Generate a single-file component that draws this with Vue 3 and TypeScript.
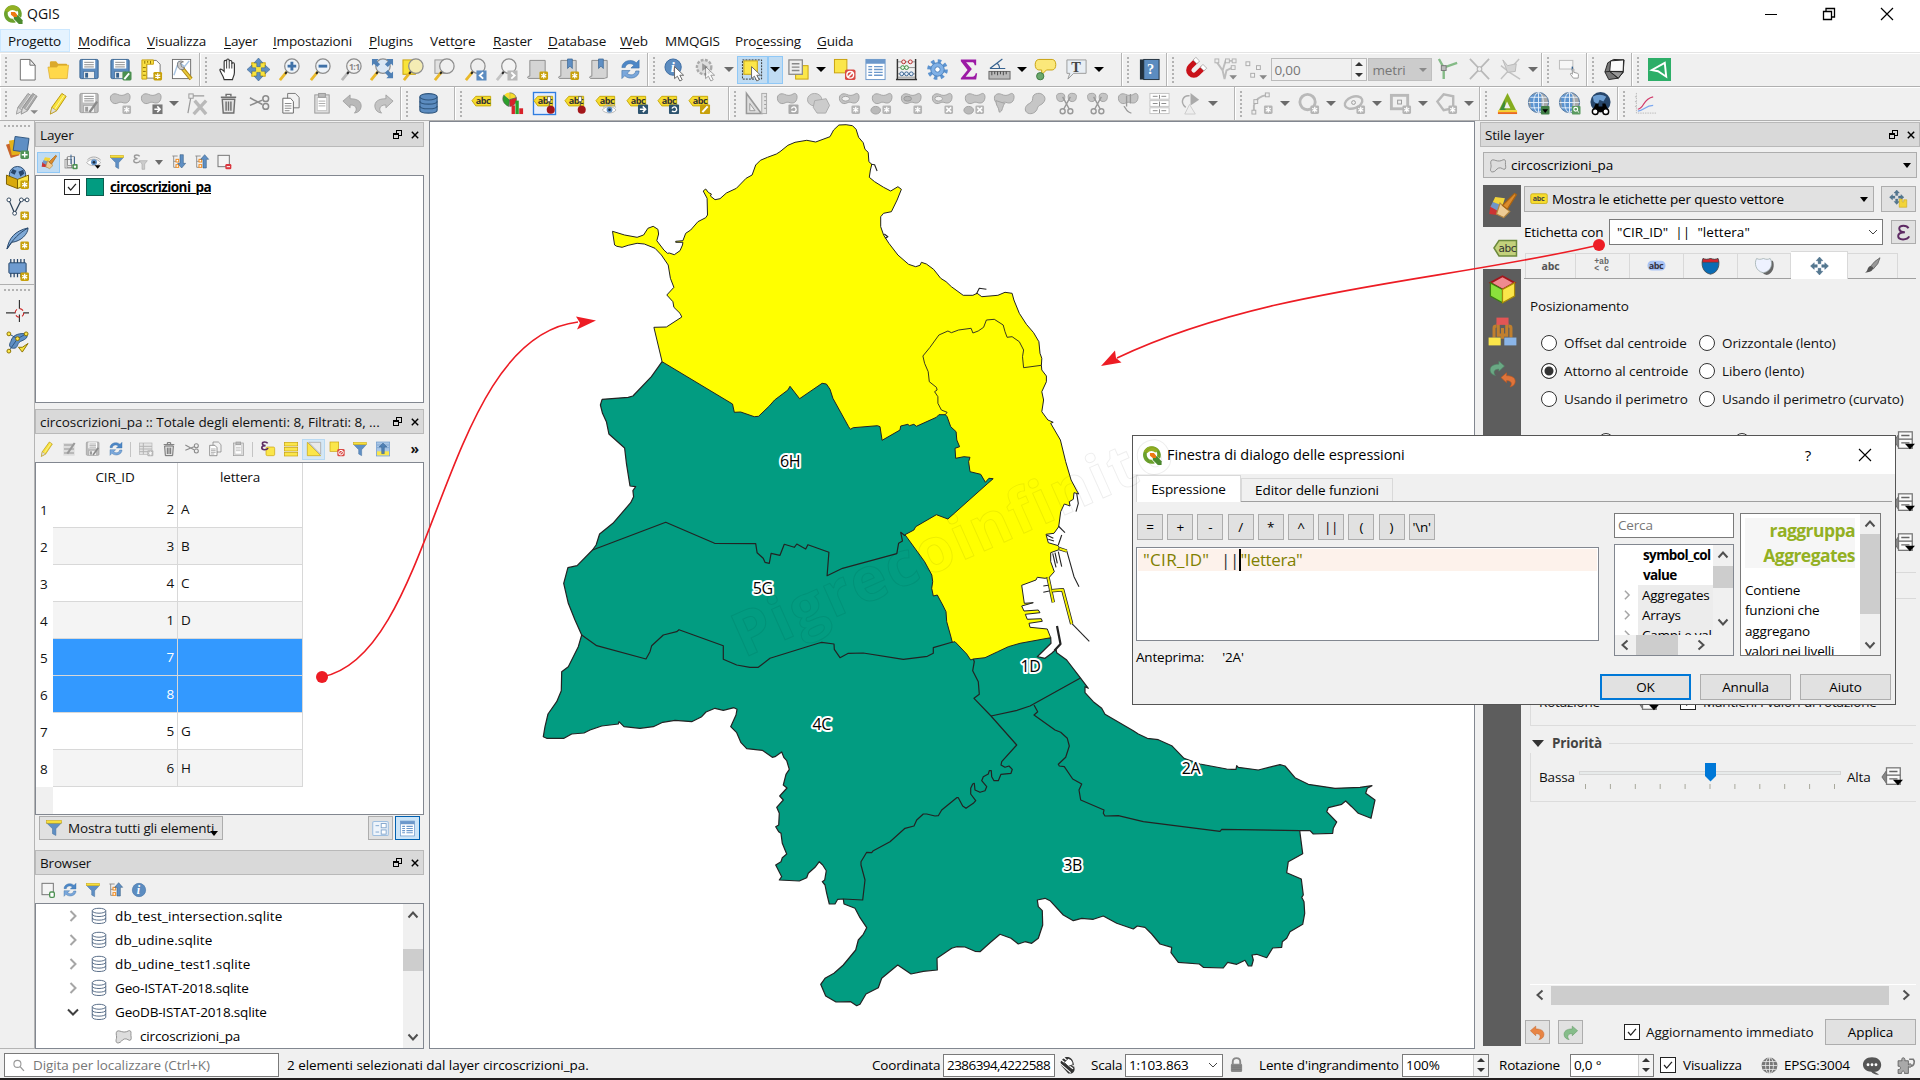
<script setup lang="ts">
interface Group { w: number; items: string[] }

const star = (x: number, y: number, c: string) =>
  `<rect x="${x}" y="${y}" width="9" height="9" rx="1.5" fill="${c}"/><path d="M${x + 4.5} ${y + 1.5}v6M${x + 1.9} ${y + 3}l5.2 3M${x + 7.1} ${y + 3}l-5.2 3" stroke="#fff" stroke-width="1.3"/>`
const gold = '#c8a10c'
const grey = '#b5b5b5'
const mag = (glass: string, handle: string, inner = '') =>
  `<path d="M9 14.5L2 23" stroke="${handle}" stroke-width="3"/><path d="M10.5 12.5L7.5 16.5" stroke="#222" stroke-width="2"/><circle cx="14.5" cy="8.5" r="7.5" fill="${glass}" stroke="#8d8d8d" stroke-width="1.3"/>${inner}`
const tag = (extra = '') =>
  `<path d="M1 9L5 4.5H20.5V14.5H5Z" fill="#f6dc2c" stroke="#c6a70c"/><text x="5" y="12.6" font-size="9.5" font-weight="700" fill="#333" font-family="Open Sans" letter-spacing="-.6">abc</text>${extra}`
const pin = '<path d="M17 6v10" stroke="#555"/><rect x="15" y="5" width="3.5" height="5" fill="#fff" stroke="#555" stroke-width=".7"/><circle cx="18.5" cy="18.5" r="4.2" fill="#a3161a"/>'
const floppy = (c: string, d: string) =>
  `<rect x="2" y="1.5" width="19" height="20" rx="1.5" fill="${c}" stroke="${d}"/><rect x="5" y="2" width="13" height="9" fill="#fff"/><path d="M6.5 4.5h10M6.5 7h10M6.5 9.3h10" stroke="#888"/><rect x="6" y="14" width="11" height="7.5" fill="#eee" stroke="${d}" stroke-width=".6"/><rect x="7.5" y="15.5" width="3" height="5" fill="${d}"/>`
const blob = '<path d="M1.5 7C1 2 6 1 9 2.5S15 4 18 2s5 2 3.5 6-5 4-8 2.8-5 2.2-8 1.2S1.8 9.500 1.5 7Z" fill="#c4c4c4" stroke="#a2a2a2"/>'
const xbadge = '<rect x="14" y="14" width="9" height="9" rx="1.5" fill="#b5b5b5"/><path d="M16 16l5 5m0-5l-5 5" stroke="#fff" stroke-width="1.6"/>'
const sheet = '<path d="M4 2.500h16v18c-2 0-2 .8-3 .8H3c-1.500 0-2-2 0-2.300h1Z" fill="#d4d4d4" stroke="#8c8c8c"/>'
const globe = (c: string, s: string) =>
  `<circle cx="12" cy="11" r="10.500" fill="#a9a9a9" stroke="${s}"/><path d="M3 5c5-4 10-4 12-3v17c-4 3-8 2-11-2Z" fill="${c}"/><path d="M1.500 11h21M12 .5v21M3.500 5.500h17M3.500 16.500h17" stroke="#e4eefa"/><ellipse cx="12" cy="11" rx="5" ry="10.500" fill="none" stroke="#e4eefa"/>`
const refresh = '<path d="M3 10C3 3 13 0 18 5l3-3v8.500h-8.500l3-3C12 4.500 7 6 6.500 10Z" fill="#4d87c7" stroke="#3a6ea5" stroke-width=".6"/><path d="M21 13.500c0 7-10 10-15 5l-3 3V13h8.500l-3 3c3.500 3 8.500 1.500 9-2.500Z" fill="#7aa7db" stroke="#3a6ea5" stroke-width=".6"/>'
const funnel = '<path d="M2 5h20l-7.500 8v9l-4.500-2.500V13Z" fill="#5f8fc4" stroke="#44709f" stroke-width=".7"/><rect x="2" y="2" width="20" height="3.600" fill="#f6e03c" stroke="#c8a10c" stroke-width=".7"/>'
const pencil = (c: string, s: string) =>
  `<path d="M5 16L15.500 1.500l4.500 3L10 19.500l-6.500 3.500Z" fill="${c}" stroke="${s}"/><path d="M8 18L18 3.200" stroke="#fff" stroke-opacity=".6"/><path d="M5 16l5 3.500-6.500 3.500Z" fill="#ddd" stroke="${s}" stroke-width=".6"/>`
const trash = '<path d="M5.500 7.500h13L17.500 22h-11Z" fill="#e4e4e4" stroke="#6f6f6f" stroke-width="1.500"/><path d="M4 5.500h16M9.500 4.500V2.500h5v2M9.500 10v9.500M12 10v9.500M14.500 10v9.500" fill="none" stroke="#6f6f6f" stroke-width="1.500"/>'
const cut = '<path d="M2 6l13 7M2 14l13-5.500" stroke="#8b8b8b" stroke-width="1.600"/><circle cx="18.500" cy="7" r="3" fill="none" stroke="#8b8b8b" stroke-width="1.600"/><circle cx="18.500" cy="15" r="3" fill="none" stroke="#8b8b8b" stroke-width="1.600"/>'
const copy = '<path d="M9 1.500h8l4 4v11H9Z" fill="#f2f2f2" stroke="#777"/><path d="M4 6.500h8l3 3.500v12H4Z" fill="#fff" stroke="#666"/><path d="M6 12h7M6 14.500h7M6 17h7M6 19.500h5" stroke="#888"/>'
const paste = '<rect x="5" y="3" width="15" height="19" fill="#ddd" stroke="#999"/><rect x="7.500" y="6" width="10" height="13.500" fill="#fff" stroke="#aaa" stroke-width=".6"/><rect x="9" y="1.500" width="7" height="4" fill="#bbb" stroke="#999"/><path d="M9 9.500h7M9 12h7M9 14.500h7" stroke="#aaa"/>'
const undo = (c: string, s: string) => `<path d="M2 9.500L9.500 3v4c8 0 12 3 11.500 8.500C20.500 19 18 21.500 14 22c3-3 3-8.500-4.500-8.500V16.500Z" fill="${c}" stroke="${s}" stroke-width=".8"/>`
const redo = (c: string, s: string) => `<g transform="matrix(-1 0 0 1 24 0)">${undo(c, s)}</g>`
const db = (c: string, s: string) =>
  `<path d="M3 5v14c0 4 18 4 18 0V5" fill="${c}" stroke="${s}" stroke-width="1.200"/><ellipse cx="12" cy="5" rx="9" ry="3.300" fill="${c}" stroke="${s}" stroke-width="1.200"/><path d="M3 9.700c0 4 18 4 18 0M3 14.500c0 4 18 4 18 0" fill="none" stroke="${s}" stroke-width="1.200"/>`
const scissors = '<path d="M3 2c6-2 8 1 7 5s-7 4-8 0 0-4 1-5ZM21 2c-6-2-8 1-7 5s7 4 8 0 0-4-1-5Z" fill="#c4c4c4" stroke="#a2a2a2"/><path d="M8 5l7 13M16 5L9 18" stroke="#999" stroke-width="1.500"/><circle cx="8" cy="20" r="2.600" fill="none" stroke="#999" stroke-width="1.500"/><circle cx="16" cy="20" r="2.600" fill="none" stroke="#999" stroke-width="1.500"/>'
const arrows4 = (c: string) =>
  `<path d="M12 0l4.500 5h-2.700v4h-3.600V5H7.500ZM12 24l-4.500-5h2.700v-4h3.600v4h2.700ZM0 12l5-4.500v2.700h4v3.600H5v2.700ZM24 12l-5 4.500v-2.700h-4v-3.600h4V7.500Z" fill="${c}" stroke="#2f567e" stroke-width=".5"/>`
const cursor = '<path d="M11 9v12.500l3-2.500 2.500 5 2.500-1.300-2.500-4.700h4Z" fill="#fff" stroke="#666"/>'
const eye = '<path d="M1 13C6 6 17 6 22 13 17 19 6 19 1 13Z" fill="#fff" stroke="#999"/><circle cx="12" cy="12.500" r="4.500" fill="#5d8fc6"/><circle cx="12" cy="12.500" r="2" fill="#1d2c3d"/><path d="M2 9C7 3 16 3 22 9" fill="none" stroke="#aaa" stroke-width="1.500"/>'
const expand = (up: boolean) =>
  `<path d="M2 3h8M4 3v17h4M4 11h5" fill="none" stroke="#888" stroke-width="1.300"/><rect x="7.500" y="8" width="4" height="4" fill="#fff" stroke="#f08a1c" stroke-width="1.500"/><rect x="7.500" y="16" width="4" height="4" fill="#fff" stroke="#f08a1c" stroke-width="1.500"/><path d="${up ? 'M16 1l6 7h-3.500v13h-5V8H10Z' : 'M16 21l6-7h-3.500V1h-5v13H10Z'}" fill="#5f8fc4" stroke="#2f567e" stroke-width=".8"/>`
const hex = '<path d="M8 9l12-2 3.500 7-4 8h-9l-4-6Z" fill="#ccc" stroke="#aaa"/>'
const curl = (c: string, w: number) =>
  `<path d="M19 6C17 1.500 6 1 6 6.500c0 3.500 4 5 8 5-5 0-9.500 1.500-9.500 5.500 0 6.500 13 6 15.500.5" fill="none" stroke="${c}" stroke-width="${w}"/>`

const icons: Record<string, string> = {
  logo: '<path d="M11.500 1.500a10.500 10.500 0 1 0 4 20.300l-3.800-4A6.400 6.400 0 1 1 18 13.500l3.500 3A10.500 10.500 0 0 0 11.500 1.500Z" fill="#6ca22c"/><path d="M2 8A10.500 10.500 0 0 1 20 6l-4 3a6.400 6.400 0 0 0-9.500.5Z" fill="#93b023"/><path d="M13 13.500h5l5.500 6V24h-4.500l-6-6Z" fill="#4c8b2e"/><path d="M9.500 9.500h4.800l2.500 3v3H13L9.500 13Z" fill="#ee7913"/>',
  new: '<path d="M4.500 1.500h10l5.500 6v15.500h-15.500Z" fill="#fff" stroke="#6d6d6d"/><path d="M14.500 1.500v6H20Z" fill="#eee" stroke="#6d6d6d"/>',
  open: '<path d="M3 5.500c0-1.500.5-2 1.500-2h5l2 2.500h8c1 0 1.500.5 1.500 1.500V21H3Z" fill="#dba92a"/><path d="M1 9.500h9l2-2h10.500L21 21.500H3Z" fill="#ffd84a" stroke="#dba92a" stroke-width=".7"/>',
  save: floppy('#5c8cc0', '#35618f'),
  saveas: floppy('#5c8cc0', '#35618f') + '<rect x="14" y="14" width="9.500" height="9.500" rx="1.500" fill="#4a8f4f"/><path d="M16 22l5-6" stroke="#fff" stroke-width="2"/>',
  layout: '<path d="M7 7V2.500h10l4 4V21H7Z" fill="#fff" stroke="#777"/><path d="M2 2h12v4.500H7V22H2Z" fill="#f9e045" stroke="#c8a10c"/><path d="M5 3v3M8 3v2M11 3v3M3 10h3M3 14h3M3 18h3" stroke="#8a7000"/>' + star(14, 14.500, gold),
  style: '<rect x="1.500" y="1.500" width="19" height="20" fill="#fff" stroke="#6d6d6d"/><path d="M3 18L8 4l6 5 5-6" fill="none" stroke="#a8c4e2" stroke-width="1.500"/><path d="M12 11l9 11" stroke="#b28a12" stroke-width="4"/><path d="M12 11l9 11" stroke="#e8c93c" stroke-width="2"/><path d="M7 5c-1 5 2 8 6 7l1-2-3-1-1-4 3-1C11 2.500 8 3 7 5Z" fill="#ccc" stroke="#666" stroke-width=".8"/>',
  hand: '<path d="M7 22.500C6 18 3 15 2.500 12.500c.5-1.500 2-1.200 4.500 1.500V4c0-2 2.600-2 2.600 0V2.500c0-2 2.700-2 2.700 0V4c0-2 2.700-1.800 2.700 0v2c.4-1.500 2.700-1.400 2.700.5V15c0 3-1.500 5-2 7.500Z" fill="#fff" stroke="#333" stroke-width="1.200" transform="translate(1.500 0)"/><path d="M11.100 4v7M13.800 4v7M16.500 5.500V11" stroke="#333"/>',
  pan: '<rect x="5" y="5" width="14" height="14" fill="#f8e33c" stroke="#c8a10c"/>' + arrows4('#5f8fc4'),
  zin: mag('#eef3f8', '#e9b92b', '<path d="M14.500 4v9M10 8.500h9" stroke="#3f71a8" stroke-width="3"/>'),
  zout: mag('#eef3f8', '#e9b92b', '<path d="M10 8.500h9" stroke="#3f71a8" stroke-width="3"/>'),
  z1: mag('#f1f1f1', '#b9b9b9', '<text x="9.300" y="12" font-size="9" font-weight="700" fill="#888" font-family="Open Sans" letter-spacing="-.5">1:1</text>'),
  zfull: '<g transform="translate(-2 0)">' + mag('#dbe7f4', '#e9b92b') + '</g><path d="M1 1h7L6 3l3.500 3.500-3 3L3 6 1 8ZM23 1v7l-2-2-3.500 3.500-3-3L18 3l-2-2ZM23 21h-7l2-2-3.500-3.500 3-3L21 16l2-2Z" fill="#4f80b5"/>',
  zsel: '<rect x="1" y="2" width="13" height="15" fill="#f8e33c" stroke="#c8a10c"/>' + mag('#f4ecb4', '#e9b92b'),
  zlay: '<rect x="2" y="2" width="13" height="14" fill="#e2e2e2" stroke="#999"/>' + mag('#efefef', '#e9b92b'),
  zlast: mag('#efefef', '#e9b92b') + '<rect x="13" y="13" width="10.500" height="10.500" fill="#5c8cc0"/><path d="M20 15l-3.500 3.300L20 21.500" stroke="#fff" stroke-width="2" fill="none"/>',
  znext: mag('#f4f4f4', '#c4c4c4') + '<rect x="13" y="13" width="10.500" height="10.500" fill="#b9b9b9"/><path d="M17 15l3.500 3.300L17 21.500" stroke="#fff" stroke-width="2" fill="none"/>',
  bm1: sheet + star(14, 14, gold),
  bm2: sheet + '<path d="M11 1h5v10l-2.500-2.500L11 11Z" fill="#5f8fc4" stroke="#35618f" stroke-width=".7"/>' + star(14, 14, gold),
  bm3: sheet + '<path d="M11 1h5v10l-2.500-2.500L11 11Z" fill="#5f8fc4" stroke="#35618f" stroke-width=".7"/>',
  refresh,
  info: '<circle cx="9.500" cy="9.500" r="8.500" fill="#5c8cc0" stroke="#3b6ba1"/><text x="7" y="15" font-size="15" font-style="italic" font-weight="700" fill="#fff" font-family="Liberation Serif">i</text>' + cursor,
  run: '<circle cx="9.500" cy="9.500" r="7.500" fill="#ddd" stroke="#aaa" stroke-width="2.500" stroke-dasharray="3 1.500"/><path d="M7.500 5.500v8l6-4Z" fill="#999"/><g opacity=".6">' + cursor + '</g>',
  select: '<rect x="1.500" y="2" width="20" height="20" fill="none" stroke="#333" stroke-dasharray="2 1.200"/><rect x="3" y="3" width="14" height="14" fill="#fbe64a" stroke="#c8a10c"/>' + cursor,
  form: '<rect x="9" y="8" width="13" height="14" fill="#fbe64a" stroke="#c8a10c"/><rect x="2" y="2" width="14" height="15" fill="#eee" stroke="#888" stroke-width="1.300"/><path d="M5 6h8M5 9.500h8M5 13h8" stroke="#888" stroke-width="1.500"/>',
  desel: '<rect x="1.500" y="1.500" width="13" height="14" fill="#fbe64a" stroke="#c8a10c"/><rect x="12.500" y="12" width="11" height="11" rx="2" fill="#d94a45"/><circle cx="18" cy="17.500" r="3.500" fill="none" stroke="#fff" stroke-width="1.500"/><path d="M15.500 20l5-5" stroke="#fff" stroke-width="1.500"/>',
  table: '<rect x="2" y="1.500" width="20" height="21" fill="#fff" stroke="#6c98cb"/><rect x="2" y="1.500" width="20" height="4.500" fill="#6c98cb"/><path d="M4.500 9h4M4.500 12h4M4.500 15h4M4.500 18h4M10.500 9h9M10.500 12h9M10.500 15h9M10.500 18h9" stroke="#6c98cb" stroke-width="1.500"/>',
  abacus: '<path d="M2.500 1v22M21.500 1v22M1 22.500h22" stroke="#333" stroke-width="1.500"/><path d="M3 4h18M3 10h18M3 16.500h18M3 20h18" stroke="#777" stroke-width=".8"/><g fill="#fbe9e9" stroke="#b52a2a"><circle cx="9" cy="4" r="2"/><circle cx="16" cy="4" r="2"/></g><g fill="#e6f6e6" stroke="#3d8b40"><circle cx="8" cy="10" r="2"/><circle cx="12" cy="10" r="2"/></g><g fill="#e6effb" stroke="#35618f"><circle cx="7" cy="16.500" r="2"/><circle cx="12" cy="16.500" r="2"/><circle cx="17" cy="16.500" r="2"/></g>',
  gear: '<circle cx="12" cy="12" r="8.800" fill="none" stroke="#5c93d0" stroke-width="4" stroke-dasharray="3.600 3.310"/><circle cx="12" cy="12" r="7" fill="#7fb0e6" stroke="#4a7fbb"/><circle cx="12" cy="12" r="2.800" fill="#fff" stroke="#4a7fbb"/>',
  sigma: '<path d="M4 1.500h16v6h-1.500c-.5-2.500-1.500-3-3-3H9.500l6 7-6.500 8h7c2 0 3-1 3.500-3.500H21L20 22.500H4V21l7-8.500L4 3.500Z" fill="#9c1aa5"/>',
  measure: '<rect x="1" y="14" width="22" height="8" fill="#b9b9b9" stroke="#666"/><path d="M4 14v4M7 14v3M10 14v4M13 14v3M16 14v4M19 14v3" stroke="#444"/><path d="M2 11L15 1M2 11h16M9 5.500c2.500 1 3 3 3 5.500" stroke="#35618f" fill="none" stroke-width="1.200"/>',
  tip: '<path d="M5 1.500h14c5 0 5 11 0 11h-6l-5 5v-5H5c-5 0-5-11 0-11Z" fill="#fbe87a" stroke="#c8a10c"/><circle cx="6.500" cy="19" r="3.800" fill="#6aa86c" stroke="#3e7a41"/>',
  ttext: '<path d="M2 2h20v14H9l-6 6 2-6H2Z" fill="#e8eef4" stroke="#9a9a9a"/><text x="6.500" y="14.500" font-size="15" font-weight="700" fill="#444" font-family="Liberation Serif">T</text>',
  help: '<rect x="2" y="1.500" width="6" height="21" fill="#22303d"/><rect x="6" y="1.500" width="16" height="21" fill="#5c8cc0" stroke="#22303d"/><text x="9.500" y="17" font-size="15" fill="#fff" font-weight="700" font-family="Liberation Serif">?</text>',
  magnet: '<g transform="rotate(45 12 12)"><path d="M4 2v9a8 8 0 0 0 16 0V2h-5.500v9a2.500 2.500 0 0 1-5 0V2Z" fill="#c9121a" transform="translate(0 2)"/><path d="M4 2h5.500v4H4ZM14.500 2H20v4h-5.500Z" fill="#fff" stroke="#999" stroke-width=".7"/></g>',
  vtx: '<g fill="none" stroke="#bdbdbd" stroke-width="2"><path d="M2 3l7 10 2 9 2-9 6-3 3-1M9 13l3-10h8"/></g><g fill="#eee" stroke="#b2b2b2"><rect x="1" y="1" width="4" height="4"/><rect x="12" y="1" width="4" height="4"/><rect x="19" y="1" width="4" height="4"/><rect x="18" y="8" width="4" height="4"/></g><path d="M16 18h8l-4 4.500Z" fill="#888"/>',
  dots: '<g fill="#f4f4f4" stroke="#ababab"><rect x="1" y="4" width="4" height="4"/><rect x="12" y="8" width="4" height="4"/><rect x="6" y="16" width="4" height="4"/></g><path d="M15 18h8l-4 4.500Z" fill="#888"/>',
  topo: '<path d="M2 1l5 9 14-5M7 10v12" stroke="#85bb87" stroke-width="2.500" fill="none"/><rect x="4.500" y="8" width="5" height="5" fill="#bbb" stroke="#777"/>',
  xing: '<path d="M2 1l20 21M22 1L2 22" stroke="#b9b9b9" stroke-width="1.800"/><circle cx="12" cy="11.500" r="2.500" fill="#eee" stroke="#aaa"/>',
  self: '<path d="M2 22L21 1M2 8l9 7 11 7" stroke="#c2c2c2" stroke-width="1.500" fill="none"/><path d="M4 2l5 6 9-2-1 8-8 1Z" fill="#d4d4d4" stroke="#b9b9b9"/>',
  rectp: '<rect x="1.500" y="2.500" width="14" height="9" fill="#f6f6f6" stroke="#bbb"/><path d="M15 9v4" stroke="#35618f" stroke-width="1.500"/><path d="M16 21l-3-4c0-1.500 1-1.500 2 0v-5c0-1 1.500-1 1.500 0v3l4 1c1 .5 1 2 .5 5Z" fill="#fff" stroke="#999"/>',
  cube: '<path d="M5 5l6-3.500L22 2l-1 13-5 6-10 1.500-4-8Z" fill="#777" stroke="#222"/><path d="M8 3L21.500 2 21 14H7Z" fill="#fafafa" stroke="#222"/><path d="M2 14.500L7 14l9 7.500" stroke="#222" fill="none"/><path d="M7 14l14 .5-5 6.500Z" fill="#999" stroke="#222"/>',
  green: '<rect x="0" y="0" width="24" height="24" fill="#2dae68"/><path d="M17.500 5L4 12.500l6.500 1.300L19 19.500Z" fill="none" stroke="#fff" stroke-width="2"/>',
  pens: '<g transform="translate(-3 0)">' + pencil('#b9b9b9', '#999') + '</g>' + '<g transform="translate(2 0)">' + pencil('#a9a9a9', '#909090') + '</g><path d="M15 19h8l-4 4Z" fill="#888"/>',
  pen: pencil('#f8e33c', '#b8940c'),
  saveg: floppy('#bcbcbc', '#9a9a9a') + '<path d="M12 21l8-11" stroke="#8a8a8a" stroke-width="2.500"/>',
  addg: blob + star(14, 14, grey),
  moveg: blob + '<rect x="13" y="13" width="10.500" height="10" fill="#777"/><path d="M15 18h6m-3-3l3 3-3 3" stroke="#fff" stroke-width="1.600" fill="none"/>',
  node: '<path d="M5 4h14M5 6L2 22" stroke="#9a9a9a" stroke-width="1.300"/><rect x="3" y="2" width="4.500" height="4.500" fill="#eee" stroke="#999"/><path d="M9 9l12 14M21 9L8 23" stroke="#b9b9b9" stroke-width="3.500"/>',
  trash, cut, copy, paste,
  undo: undo('#b9b9b9', '#999'),
  redo: redo('#c4c4c4', '#999'),
  db: db('#5c8cc0', '#2f567e'),
  abc: tag(),
  diag: '<path d="M8 8V.8A7.500 7.500 0 0 1 15 6Z" fill="#f6dc2c" stroke="#555" stroke-width=".6"/><path d="M8 8l-6-5c-3 5 0 10 5 12Z" fill="#2ca02c" stroke="#555" stroke-width=".6"/><path d="M8 8l7-2c1 4-2 9-7 9Z" fill="#d8222a" stroke="#555" stroke-width=".6"/><path d="M8 8L2.500 3C4 1 6 .6 8 .8Z" fill="#f6dc2c"/><rect x="10" y="14" width="3.500" height="9" fill="#d8222a"/><rect x="14" y="9" width="3.500" height="14" fill="#27a127"/><rect x="18" y="17" width="4" height="6" fill="#d8222a"/>',
  abpin1: '<rect x=".5" y=".5" width="23" height="23" fill="#e7eefb" stroke="#2f7de0" stroke-width="1.400"/>' + tag(pin),
  abpin: tag(pin),
  abeye: tag('<g transform="translate(7 10) scale(.68)">' + eye + '</g>'),
  abmove: tag('<rect x="12.500" y="13" width="10.500" height="10" rx="1" fill="#2d536f"/><path d="M14.500 18h6m-3-3l3 3-3 3" stroke="#fff" stroke-width="1.600" fill="none"/>'),
  abrot: tag('<rect x="12.500" y="13" width="10.500" height="10" rx="1" fill="#2d536f"/><path d="M15.500 20c4 1.500 6-1 4.500-3.500-1.500-2-4.500-.5-4 1" stroke="#fff" stroke-width="1.400" fill="none"/>'),
  abedit: tag('<rect x="12.500" y="13" width="10.500" height="10" rx="1" fill="#c8a10c"/><path d="M15 21l5.500-6" stroke="#fff" stroke-width="2.200"/>'),
  tri: '<path d="M1.500 1.500v21H17Z" fill="#ddd" stroke="#999" stroke-width="1.600"/><path d="M5 12v7.500h5.500Z" fill="#f0f0f0" stroke="#999"/><rect x="17.500" y="1.500" width="5" height="21" fill="#e4e4e4" stroke="#aaa"/><path d="M20 5h2M20 9h2M20 13h2M20 17h2" stroke="#999"/>',
  rot: blob + '<rect x="13" y="13" width="10.500" height="10" rx="1" fill="#aaa"/><path d="M16 20c4 1.500 6-1 4.500-3.500-1.500-2-4.500-.5-4 1" stroke="#fff" stroke-width="1.400" fill="none"/>',
  simp: '<ellipse cx="8" cy="8" rx="7.500" ry="6.500" fill="#ccc" stroke="#aaa"/>' + hex,
  ring: blob + '<ellipse cx="8" cy="7" rx="4" ry="2.500" fill="#f0f0f0" stroke="#a2a2a2"/>' + star(14, 14, grey),
  part: '<g transform="translate(2 0)">' + blob + '</g><ellipse cx="7" cy="19" rx="5" ry="4" fill="#b9b9b9" stroke="#a2a2a2"/>' + star(14, 14, grey),
  fring: blob + '<ellipse cx="8" cy="7" rx="4" ry="2.500" fill="#b5b5b5" stroke="#999"/>' + star(14, 14, grey),
  dring: blob + '<ellipse cx="8" cy="7" rx="4" ry="2.500" fill="#f0f0f0" stroke="#a2a2a2"/>' + xbadge,
  dpart: '<g transform="translate(2 0)">' + blob + '</g><ellipse cx="7" cy="19" rx="5" ry="4" fill="#b9b9b9" stroke="#a2a2a2"/>' + xbadge,
  reshape: blob + '<path d="M3 9c0 6 3 6 3.500 12 4 0 3-7 6-9Z" fill="#c4c4c4" stroke="#a2a2a2"/>',
  offset: '<path d="M14 1.500c5-1 10 4 7 8.500s-6 3-7 7-6 7-10 5-3-7 0-9 5-2.500 5-6 2-5 5-5.500Z" fill="#c6c6c6" stroke="#a2a2a2"/>',
  split: scissors,
  merge: blob + '<path d="M10 4v11M14 2v10M7 15c2 0 2 6 8 7" stroke="#999" fill="none" stroke-width="1.400"/>',
  mattr: '<g fill="#fff" stroke="#c4c4c4"><rect x="2" y="1.500" width="20" height="6"/><rect x="2" y="9" width="20" height="6"/><rect x="2" y="16.500" width="20" height="6"/></g><path d="M5 4.500h5m4 0h5M5 12h5m4 0h5M5 19.500h5m4 0h5M12 3v4m0 3v5m0 3v4" stroke="#888"/>',
  rotp: '<path d="M7 16C0 10 5 3 11 4" fill="none" stroke="#aaa" stroke-width="1.500"/><path d="M12 1l9 7-9 6Z" fill="#aaa"/><path d="M11 13l6 10H6Z" fill="#eee" stroke="#ccc"/>',
  curve: '<path d="M3 22V14C5 7 10 4 17 3" fill="none" stroke="#b9b9b9" stroke-width="2"/><g fill="#eee" stroke="#aaa"><rect x="1" y="19" width="4" height="4"/><rect x="3" y="8" width="4" height="4"/><rect x="15" y="1" width="4" height="4"/></g>' + star(13.500, 14, grey),
  circ: '<circle cx="11" cy="10.500" r="8" fill="none" stroke="#b9b9b9" stroke-width="3"/>' + star(14, 14, grey),
  elli: '<ellipse cx="11" cy="11" rx="9.500" ry="6" fill="none" stroke="#b9b9b9" stroke-width="2.500" transform="rotate(-20 11 11)"/><circle cx="11" cy="11" r="2" fill="#eee" stroke="#999"/>' + star(14, 14, grey),
  rect: '<rect x="2.500" y="3.500" width="17" height="14" fill="none" stroke="#b9b9b9" stroke-width="3"/><rect x="9" y="8.500" width="4" height="4" fill="#eee" stroke="#999"/>' + star(14, 14, grey),
  poly: '<path d="M2.500 10L9 2.500 19 4.500V17L9 19Z" fill="none" stroke="#b9b9b9" stroke-width="2.500"/>' + star(14, 14, grey),
  tgreen: '<path d="M12 1l9 18H3Z" fill="#86ad1f"/><path d="M9 8l-5 11h6Z" fill="#3e8c3a"/><path d="M11.500 10l3.500 7H8.500Z" fill="#f0f0f0"/><path d="M2 19h20v2H2Z" fill="#f7d22c"/><path d="M2 21h20v2H2Z" fill="#ea6a1c"/>',
  gl1: globe('#5b93cf', '#446f9e') + '<rect x="14.500" y="14.500" width="9" height="9" rx="1" fill="#3f7d45"/><path d="M16 18h6l-3 4Z" fill="#000"/>',
  gl2: globe('#5b93cf', '#446f9e') + '<rect x="14.500" y="14.500" width="9" height="9" rx="1" fill="#5a9a5f"/><circle cx="18.500" cy="18" r="2" fill="none" stroke="#fff" stroke-width="1.200"/><path d="M20 19.500l2 2" stroke="#fff"/>',
  gl3: '<circle cx="12" cy="10.500" r="10.500" fill="#27466a"/><path d="M4 5c4-3 10-3 14 0l-3 5-4-2-2 5-4-3Z" fill="#6e9fd2"/><path d="M3 21l4-9h3v3h4v-3h3l4 9Z" fill="#000"/><circle cx="6.500" cy="20.500" r="3" fill="#fff" stroke="#000" stroke-width="1.500"/><circle cx="17.500" cy="20.500" r="3" fill="#fff" stroke="#000" stroke-width="1.500"/>',
  plot: '<path d="M2.500 1v21H23M1 5h2M1 10h2M1 15h2" stroke="#b9b9b9" fill="none" stroke-dasharray="1.500 1"/><path d="M4 18c7-1 5-11 16-13" stroke="#d13a6a" fill="none" stroke-width="1.300"/><path d="M4 20c6 0 8-6 16-6" stroke="#7aa7f0" fill="none" stroke-width="1.300"/>',
  addl: '<path d="M0 9l10-3 4 14-9 3Z" fill="#c8642a"/><path d="M3 5l10-2 2 16-9 1Z" fill="#e4b21a"/><path d="M9.500 .5L24 2.500 22 17 7.500 15Z" fill="#5f8fc4" stroke="#2f567e"/><rect x="15" y="15" width="9" height="9" rx="1.500" fill="#4f9254"/><path d="M19.500 16.500v6m-3-3h6" stroke="#fff" stroke-width="1.500"/>',
  ogc: '<circle cx="12" cy="9" r="8.500" fill="#7fabdb" stroke="#27466a"/><path d="M7 3l4 2-2 4-4-2ZM13 6l5-2 1 4-4 3Z" fill="#27466a"/><path d="M.5 9.500L12 14v9.500L.5 19Z" fill="#d8a90c" stroke="#7a5e00"/><path d="M12 14l11.500-4.500V19L12 23.500Z" fill="#fbe64a" stroke="#7a5e00"/>' + star(15, 15, gold),
  vnew: '<path d="M3 3l6 14 7-14h6" fill="none" stroke="#2d4258" stroke-width="1.300"/><g fill="#fff" stroke="#2d4258"><circle cx="3" cy="3" r="2"/><circle cx="9" cy="17" r="2"/><circle cx="16" cy="3" r="2"/><circle cx="22" cy="3" r="2"/></g>' + star(15, 15, gold),
  feather: '<path d="M1 23C3 12 9 4 23 1c0 6-7 14-17 15Z" fill="#7fa9d6" stroke="#27466a"/><path d="M1 23C7 13 14 6 23 1" stroke="#27466a" fill="none"/>' + star(15, 15, gold),
  chip: '<path d="M5 1v19M8.500 1v19M12 1v19M15.500 1v19M19 1v8" stroke="#27466a" stroke-width="1.300"/><rect x="3" y="5" width="18" height="11" rx="1" fill="#6e9bd0" stroke="#27466a"/>' + star(15, 15, gold),
  cross: '<path d="M14 0v9M14 15v8M0 13.500h10M18 13.500h6" stroke="#333" stroke-width="1.200"/><circle cx="14" cy="13.500" r="4.500" fill="none" stroke="#c22" stroke-width="1.200" stroke-dasharray="4 3"/>',
  topoc: '<path d="M5 11c2-8 10-9 17-8 1 5-3 6-7 8s-2 7-7 7-5-4-3-7Z" fill="#5f8fc4" stroke="#2f567e"/><path d="M3 3l9 5M3 21l9-13 9-5" stroke="#2f567e" fill="none"/><g fill="#fbe64a" stroke="#8a7000"><circle cx="3" cy="3" r="2"/><circle cx="21" cy="3" r="2"/><circle cx="12" cy="8" r="2"/><circle cx="3" cy="21" r="2"/></g><path d="M13 17l4 5 6-9-6 4Z" fill="#f8e33c" stroke="#8a7000"/>',
  brush: '<path d="M2 12l8-1-1 9-8-1Z" fill="#c33"/><path d="M4 9l8 2-3 6-7-4Z" fill="#7096c8"/><path d="M6 5l8 1-2 6-8-3Z" fill="#f2d43a"/><path d="M10 10l8 7-5 5-6-3Z" fill="#eecb94" stroke="#b5873f"/><path d="M12 12l7-7 3-3 1.500 1L16 15Z" fill="#dd8b2b" stroke="#a86313"/>',
  group: '<path d="M6 5v15h10" fill="none" stroke="#777"/><rect x="3" y="8" width="10" height="13" fill="none" stroke="#777"/><rect x="7" y="4" width="10" height="13" fill="none" stroke="#777"/><path d="M12 1v14M17 4v13" stroke="#35618f" stroke-width="1.500"/><rect x="14" y="15" width="8" height="8" rx="1.500" fill="#4f9254"/><circle cx="18" cy="19" r="1.800" fill="#fff"/>',
  eyed: eye + '<path d="M13 17h9l-4.500 5Z" fill="#000"/>',
  funnel,
  eps: '<g transform="scale(.6)">' + curl('#999', 3.500) + '</g><path d="M11 10h12l-4 5v8h-4v-8Z" fill="#ccc" stroke="#aaa"/>',
  expd: expand(false),
  expu: expand(true),
  rem: '<rect x="3" y="2" width="17" height="17" fill="#f4f4f4" stroke="#777" stroke-width="1.500"/><rect x="14" y="15" width="9" height="8" rx="2" fill="#d9363e"/><path d="M16 19h5" stroke="#fff" stroke-width="1.600"/>',
  addp: '<rect x="3" y="2" width="17" height="17" fill="#f4f4f4" stroke="#777" stroke-width="1.500"/><rect x="14.500" y="15" width="7" height="8" rx="2" fill="#fff" stroke="#4f9254" stroke-width="2"/>',
  infob: '<circle cx="12" cy="12" r="10" fill="#5c8cc0" stroke="#4977ab"/><text x="8.500" y="18.500" font-size="18" font-style="italic" font-weight="700" fill="#fff" font-family="Liberation Serif">i</text>',
  multi: '<rect x="2" y="3" width="17" height="19" fill="#ddd"/><path d="M3 6h15M3 12h15M3 18h15" stroke="#b9b9b9" stroke-width="3"/><path d="M8 19L19 3" stroke="#999" stroke-width="3"/>',
  tnew: '<rect x="2" y="3" width="19" height="17" fill="#e4e4e4" stroke="#b4b4b4"/><path d="M2 8h19M2 12h19M2 16h19M8 3v17" stroke="#b4b4b4" stroke-width="1.500"/>' + star(14, 14, grey),
  epsy: '<rect x="9" y="9" width="13" height="13" rx="2" fill="#fbe64a" stroke="#c8a10c"/><g transform="scale(.6)">' + curl('#5d2a63', 4) + '</g>',
  selall: '<rect x="2" y="2" width="20" height="5.500" fill="#fbe64a" stroke="#c8a10c"/><rect x="2" y="9.500" width="20" height="5.500" fill="#fbe64a" stroke="#c8a10c"/><rect x="2" y="17" width="20" height="5.500" fill="#fbe64a" stroke="#c8a10c"/>',
  inv: '<path d="M2 2v20h20Z" fill="#fbe64a" stroke="#c8a10c"/><path d="M4 2h18v18Z" fill="#e9e9e9" stroke="#999"/>',
  top: '<rect x="2" y="1.500" width="20" height="21" fill="#a9c6e6" stroke="#6c98cb"/><path d="M3 6h18M3 10h18" stroke="#6c98cb"/><rect x="3" y="15.500" width="18" height="6" fill="#fbe64a"/><path d="M12 3l6 6h-4v10h-4V9H6Z" fill="#4f80b5" stroke="#2f567e" stroke-width=".6"/>',
  formv: '<rect x="1" y="2" width="22" height="20" rx="2" fill="#eef4fb" stroke="#9fbfe0" stroke-width="1.500"/><g fill="#fff" stroke="#7fa3cb" stroke-width="1.300"><rect x="13" y="5" width="7" height="6"/><rect x="13" y="14" width="7" height="6"/></g><path d="M5 8h5M5 17h5" stroke="#5c8cc0"/>',
  dbo: db('#fff', '#48607d'),
  poly2: '<path d="M2 6c1-3 4-2 7-1s7 1 10-1c3-1 4 1 3.500 4s1.500 7-.5 9-5-3-9-1.500-4 5-8 5.500-4-3-3-6-1-6 0-9Z" fill="#ddd" stroke="#8a8a8a" stroke-width="1.300"/>',
  lens: '<circle cx="10" cy="9" r="6.500" fill="none" stroke="#999" stroke-width="2"/><path d="M15 14l7 8" stroke="#999" stroke-width="2.500"/>',
  tagg: '<path d="M1 12L6 4.500H23.500V20H6Z" fill="#c3d17c" stroke="#6d8a3c" stroke-width="1.500"/><text x="5.500" y="16" font-size="10.500" fill="#333" font-family="DejaVu Sans" letter-spacing="-.4">abc</text>',
  cubec: '<path d="M12 1l10 5.500L12 12 2 6.500Z" fill="#f08a90" stroke="#a2161c" stroke-width="1.500"/><path d="M2 6.500L12 12v11L2 17.500Z" fill="#8be03c" stroke="#3c7a12"/><path d="M22 6.500L12 12v11l10-5.500Z" fill="#fbe64a" stroke="#a88a08"/>',
  brushes: '<path d="M5 17V9c0-1 1-1.500 2-1.500M19 17V9c0-1-1-1.500-2-1.500M8.500 5v10h7V5M12 9v9" stroke="#c07f2e" stroke-width="2.500" fill="none"/><rect x="7" y=".5" width="10" height="6" fill="#e25555"/><rect x=".5" y="17" width="10" height="6.500" fill="#fbe64a"/><rect x="13.500" y="17" width="10" height="6.500" fill="#8ab5e8"/>',
  hist: '<g transform="scale(.62)">' + redo('#6aa884', '#4d8a66') + '</g><g transform="translate(9.500 9.500) scale(.62)">' + undo('#e0743a', '#c0561c') + '</g>',
  undoo: undo('#e88443', '#c8662a'),
  redog: redo('#86bd8a', '#5f9a64'),
  label: '<rect x="1" y="5" width="22" height="13" rx="2" fill="#f6dc2c" stroke="#c6a70c"/><text x="3.500" y="15" font-size="9.500" font-weight="700" fill="#444" font-family="Open Sans" letter-spacing="-.3">abc</text>',
  place: '<g transform="scale(.8)">' + arrows4('#54788f') + '</g><path d="M13 12h4v4h2v-3h4v10H13Z" fill="#f2d43a" stroke="#c8a10c" stroke-width=".7"/>',
  epsi: curl('#5d2a63', 2.800),
  t1: '<text x="0" y="17" font-size="14" font-weight="700" fill="#555" font-family="Open Sans">abc</text>',
  t2: '<text x="1" y="9" font-size="11" font-weight="700" fill="#666" font-family="Liberation Mono">+ab</text><text x="1" y="19" font-size="11" font-weight="700" fill="#666" font-family="Liberation Mono">&lt; c</text>',
  t3: '<rect x="0" y="5" width="24" height="13" rx="6" fill="#a9c3f5"/><text x="1.500" y="16" font-size="12" font-weight="700" fill="#334" font-family="Open Sans" letter-spacing="-.5">abc</text>',
  t4: '<path d="M2 2c3 1.500 6 1.500 10 0 4 1.500 7 1.500 10 0 3 7 1 19-10 21C1 21-1 9 2 2Z" fill="#0a6cb4" stroke="#444"/><path d="M2 2c3 1.500 6 1.500 10 0 4 1.500 7 1.500 10 0l1 5H1Z" fill="#d8242c" stroke="#444" stroke-width=".7"/>',
  t5: '<path d="M5 5h18c3 6 1 17-8 19C6 22 3 11 5 5Z" fill="#666"/><path d="M1.500 2c3 1.500 5 1.500 9 0 4 1.500 6 1.500 9 0 4 6 2 17-9 19C0 19-2 8 1.500 2Z" fill="#eef2ff" stroke="#9aa"/>',
  t6: arrows4('#54788f'),
  t7: '<path d="M22 1l-3 8-6 7-4-3 6-7Z" fill="#999" stroke="#555"/><path d="M12 13c2 2 1 7-10 8 4-2 3-8 7-9Z" fill="#555"/>',
  ddef: '<path d="M1 12l5-7v14Z" fill="#888" stroke="#666"/><rect x="6" y="2" width="15" height="18" fill="#fafafa" stroke="#777" stroke-width="1.400"/><path d="M9 6h9M6 10h15M9 14h9" stroke="#666" stroke-width="1.500"/><path d="M13 15h11l-5.500 6Z" fill="#000"/>',
  globeg: '<circle cx="12" cy="12" r="10" fill="#777"/><path d="M2 12h20M12 2v20M4 7h16M4 17h16" stroke="#eee"/><ellipse cx="12" cy="12" rx="5" ry="10" fill="none" stroke="#eee"/>',
  bubble: '<path d="M12 1.500c15 0 15 18 3 18.500l6 3.500c-4 .5-8-1-10-3.500C-3 19-3 1.500 12 1.500Z" fill="#555"/><circle cx="7" cy="11" r="1.800" fill="#fff"/><circle cx="12" cy="11" r="1.800" fill="#fff"/><circle cx="17" cy="11" r="1.800" fill="#fff"/>',
  puzzle: '<path d="M2 6h5c-2-5 5-5 3.500 0H15v5c2-2 4-1 4 1s-2 3-4 1.500V22h-5c1-4-4-4-3.500 0H2v-5c4 1 4-5 0-4Z" fill="#a9a9a9" stroke="#555"/><path d="M16 4h5c3 3 1 9-3 9" fill="none" stroke="#777" stroke-width="2"/>',
  lock: '<path d="M6 11V7c0-8 12-8 12 0v4" fill="none" stroke="#888" stroke-width="3"/><rect x="3" y="10" width="18" height="13" rx="2" fill="#8b8b8b"/><path d="M4 13.500h16M4 16.500h16M4 19.500h16" stroke="#6b6b6b"/>',
  mouse: '<path d="M7 3c4-4 11-1 12 4l2 9c0 5-4 7-8 6L4 12C2 8 4 5 7 3Z" fill="#333"/><path d="M3 4l16 12M6 1l14 12M2 9l14 12" stroke="#fff" stroke-width="1.500"/><path d="M13 3c4 1 6 4 6 8l-6 2-5-5Z" fill="#fff" stroke="#333"/>',
}

const row1: Group[] = [
  { w: 200, items: ['new', 'open', 'save', 'saveas', 'layout', 'style'] },
  { w: 448, items: ['hand', 'pan', 'zin', 'zout', 'z1', 'zfull', 'zsel', 'zlay', 'zlast', 'znext', 'bm1', 'bm2', 'bm3', 'refresh'] },
  { w: 474, items: ['info', 'run', '-', '!select', '!-', 'form', '+', 'desel', 'table', 'abacus', 'gear', 'sigma', 'measure', '+', 'tip', 'ttext', '+'] },
  { w: 45, items: ['help'] },
  { w: 375, items: ['magnet', 'vtx', 'dots', '#', 'topo', 'xing', 'self', '-'] },
  { w: 45, items: ['rectp'] },
  { w: 45, items: ['cube'] },
  { w: 288, items: ['green'] },
]
const row2: Group[] = [
  { w: 401, items: ['pens', 'pen', 'saveg', 'addg', 'moveg', '-', 'node', 'trash', 'cut', 'copy', 'paste', 'undo', 'redo'] },
  { w: 54, items: ['db'] },
  { w: 274, items: ['abc', 'diag', 'abpin1', 'abpin', 'abeye', 'abmove', 'abrot', 'abedit'] },
  { w: 506, items: ['tri', 'rot', 'simp', 'ring', 'part', 'fring', 'dring', 'dpart', 'reshape', 'offset', 'split', 'split', 'merge', 'mattr', 'rotp', '-'] },
  { w: 245, items: ['curve', '-', 'circ', '-', 'elli', '-', 'rect', '-', 'poly', '-'] },
  { w: 138, items: ['tgreen', 'gl1', 'gl2', 'gl3'] },
  { w: 302, items: ['plot'] },
]
const menus = [
  ['', 'P', 'rogetto', 70], ['', 'M', 'odifica', 69], ['', 'V', 'isualizza', 77], ['', 'L', 'ayer', 49], ['', 'I', 'mpostazioni', 96],
  ['', 'P', 'lugins', 61], ['Vett', 'o', 're', 63], ['', 'R', 'aster', 55], ['', 'D', 'atabase', 72], ['', 'W', 'eb', 45],
  ['MMQGIS', '', '', 70], ['Pro', 'c', 'essing', 82], ['', 'G', 'uida', 60],
] as [string, string, string, number][]
const layerTools = ['!brush', 'group', 'eyed', 'funnel', 'eps', '-', 'expd', 'expu', 'rem']
const tableTools = ['pen', 'multi', 'saveg', 'refresh', '|', 'tnew', 'trash', 'cut', 'copy', 'paste', '|', 'epsy', 'selall', '!inv', 'desel', 'funnel', 'top']
const browserTools = ['addp', 'refresh', 'funnel', 'expu', 'infob']
const rows: [number, string][] = [[2, 'A'], [3, 'B'], [4, 'C'], [1, 'D'], [7, ''], [8, ''], [5, 'G'], [6, 'H']]
const files = ['db_test_intersection.sqlite', 'db_udine.sqlite', 'db_udine_test1.sqlite', 'Geo-ISTAT-2018.sqlite', 'GeoDB-ISTAT-2018.sqlite']
const radios = ['Offset dal centroide', 'Orizzontale (lento)', 'Attorno al centroide', 'Libero (lento)', 'Usando il perimetro', 'Usando il perimetro (curvato)']
const ops = ['=', '+', '-', '/', '*', '^', '||', '(', ')', "'\\n'"]
const tabs = [['t1', 51], ['t2', 54], ['t3', 54], ['t4', 54], ['t5', 53], ['t6', 57], ['t7', 50]] as [string, number][]
const ticks = Array.from({ length: 11 }, (_, i) => i)

/* Map sheets: each digitised in its own units, placed on the canvas here. */
const sheetOf = (ox: number, oy: number, sx: number, sy: number) => (pts: string) =>
  pts.trim().split(/\s+/).map((p) => {
    const [x, y] = p.split(',').map(Number)
    return `${(ox + x / sx).toFixed(1)},${(oy + y / sy).toFixed(1)}`
  }).join(' ')
const N = sheetOf(530, 110, 2.8, 3)
const W = sheetOf(530, 560, 3, 3)
const E = sheetOf(930, 480, 3, 3)

const yellow = [
  N('370,755 347,652 382,651 425,621 420,610 403,592 400,575 383,555 403,532 393,505 387,465 368,435 350,415 320,402 300,400 275,406 258,412 243,409 237,405 231,364 265,375 300,382 318,375 330,355 345,349 358,358 360,372 355,392 375,420 385,430 390,429 404,434 420,422 427,405 428,397 408,397 408,394 428,392 436,370 450,360 470,335 492,323 497,315 496,265 485,243 492,237 500,248 508,252 505,258 518,269 532,266 550,249 578,235 605,205 622,195 632,165 645,151 665,142 690,132 700,125 722,106 742,97 775,91 800,96 840,80 850,60 865,45 885,44 903,47 913,58 920,82 933,98 938,118 947,127 949,155 957,163 953,180 950,202 965,215 990,232 1010,243 1030,230 1040,238 1028,270 1012,305 990,310 982,320 982,350 990,375 1005,400 1030,435 1060,463 1080,470 1092,466 1096,457 1110,462 1130,478 1150,505 1165,515 1180,530 1213,556 1240,556 1252,550 1265,560 1310,556 1330,547 1350,550 1355,570 1370,610 1390,643 1410,668 1425,695 1428,730 1433,745 1432,766 1433,780 1446,798 1446,815 1433,845 1438,870 1433,905 1450,930 1465,937 1458,940 1485,990 1500,1055 1515,1110 1530,1140'),
  E('446,42 432,38 430,58 418,65 420,78 412,75 403,72 392,95 386,140 372,160 348,163 355,188 385,197 390,208 362,218 362,245 373,275 358,292 345,295 322,292 318,300 275,316 283,370 310,368 275,378 282,393 325,390 330,398 286,403 292,418 334,416 337,424 297,430 300,442 352,447 362,473 270,490 235,500 203,515 165,533 130,537 122,540 110,522 75,485 67,487 62,468 50,425 48,395 38,375 22,345 10,348 5,325 8,305'),
  N('1125,1395 1105,1355 1050,1274 1075,1260 1080,1250 1138,1214 1170,1227 1282,1120 1297,1106 1285,1105 1275,1117 1262,1093 1232,1085 1228,1055 1232,1042 1215,1040 1192,1045 1190,1015 1203,1010 1195,990 1193,965 1178,950 1168,920 1163,914 1145,914 1138,922 1082,949 1075,943 1062,947 1058,943 1038,948 1036,960 986,991 980,950 973,947 905,953 897,958 892,950 848,865 840,838 830,822 818,820 755,866 728,829 722,840 685,870 670,888 640,919 628,920 590,906 572,907 567,882'),
].join(' ')
const green = [
  N('370,755 340,800 288,858 275,862 202,868 197,885 203,910 214,935 221,972 265,1014 270,1060 280,1128 296,1130 288,1142 290,1160 282,1178 232,1240 195,1272 185,1305 175,1320 132,1367 106,1373'),
  W('101,70 115,130 135,180 155,225 145,260 115,320 95,335 94,392 80,425 54,462 45,500 40,530 50,535 102,535 125,522 162,519 180,510 215,498 265,492 267,485 282,500 330,505 370,500 398,487 435,481 485,485 515,470 528,456 555,445 580,451 612,443 621,448 618,465 602,500 620,518 633,548 650,566 697,571 727,592 735,590 755,576 762,593 770,602 778,628 768,643 760,675 771,684 749,708 760,720 740,742 748,760 746,795 737,800 746,815 753,820 757,850 770,882 757,893 753,905 737,915 755,950 748,960 808,963 830,953 835,940 855,922 868,905 878,915 889,932 884,960 877,965 885,975 890,1000 898,1032 915,1032 923,1018 940,1017 942,1032 975,1045 990,1073 1010,1103 1000,1123 985,1140 977,1170 940,1215 912,1240 885,1255 872,1273 887,1308 918,1326 962,1325 980,1337 990,1333 1008,1302 1045,1283 1055,1255 1103,1215 1143,1242 1180,1234 1222,1230 1221,1195'),
  E('65,1405 80,1400 105,1401 135,1414 150,1415 180,1388 210,1363 243,1375 265,1392 285,1385 305,1390 325,1375 338,1335 337,1292 325,1280 322,1260 345,1255 360,1262 400,1305 430,1322 455,1315 490,1318 520,1308 560,1330 610,1347 622,1338 645,1342 665,1362 690,1392 725,1402 723,1418 745,1447 808,1452 820,1462 880,1464 893,1447 920,1453 945,1441 955,1458 965,1458 970,1440 966,1425 980,1423 1010,1433 1028,1404 1055,1402 1057,1385 1070,1375 1080,1355 1118,1333 1124,1300 1122,1265 1115,1252 1120,1245 1114,1197 1070,1178 1075,1145 1118,1121 1109,1052 1140,1052 1150,1062 1208,1060 1210,1045 1220,1026 1190,995 1195,983 1235,973 1247,963 1265,980 1285,1000 1323,1015 1335,960 1307,940 1312,925 1326,917 1290,922 1215,925 1135,913 1095,893 1065,858 1050,854 1025,860 985,870 925,862 920,857 918,868 905,868 890,867 810,852 762,835 725,797 685,779 652,775 625,762 610,752 525,703 515,685 490,665 465,638 465,620 475,625 450,592 410,540 380,518 378,508 365,520 345,535 322,530 363,490 362,473 200,480 100,300'),
  N('1350,1150 1300,900 1000,800 870,790 755,800 600,780'),
].join(' ')
const borders = [
  N('175,1320 380,1237 517,1300 632,1301 636,1328 653,1345 658,1357 670,1360 675,1330 700,1336 712,1303 740,1312 747,1302 772,1317 778,1304 837,1327 832,1397 875,1375 1027,1331 1032,1300 1043,1293 1038,1267 1050,1277'),
  N('1163,914 1168,907 1152,900 1142,880 1142,860 1133,845 1140,840 1138,832 1118,815 1115,785 1105,760 1100,738 1120,712 1145,675 1170,663 1180,668 1200,660 1235,655 1240,669 1255,663 1270,652 1278,630 1300,628 1325,645 1330,665 1336,682 1350,680 1370,695 1382,720 1379,740 1382,773 1432,766'),
  W('155,225 200,257 348,297 360,275 365,257 400,225 440,215 447,209 580,257 580,298 620,315 660,322 685,322 720,295 865,250 875,247 912,252 913,268 930,293 955,280 1000,279 1120,298 1192,289 1210,280 1210,263 1268,246'),
  E('130,537 133,545 128,572 145,605 148,643 132,655 183,708 260,795 215,845 213,855 225,862 237,858 247,868 243,880 213,883 205,902 192,902 185,890 184,872 178,872 175,882 160,890 155,902 170,920 165,932 150,937 135,930 133,910 128,912 122,925 122,942 137,962 130,970 108,985 98,978 85,953 80,953 35,990 25,1007 15,1008 -10,1002 -20,1002 -40,1020 -48,1038 -75,1045 -120,1085 -170,1112 -175,1118 -190,1117 -207,1145 -207,1155 -195,1200 -202,1260 -260,1257'),
  E('183,708 258,692 300,678 450,595'),
  E('312,675 323,695 312,705 375,750 392,757 412,775 418,798 407,832 385,853 388,858 403,860 428,897 455,912 447,930 452,960 522,990 520,1000 525,1008 565,1007 640,1025 870,1054 875,1048 1109,1052'),
]
const piers = [
  N('955,163 965,164 972,183'), N('1250,552 1258,535 1278,538'), N('992,372 1002,380 994,385'),
  E('440,40 445,70 438,95'), E('385,138 405,158'), E('395,165 385,195'), E('350,165 370,175'), E('355,178 372,183'),
  E('385,205 410,212 432,290 447,320'), E('375,218 382,250'), E('368,220 378,262'), E('385,215 395,260'), E('340,318 355,316'), E('340,337 358,333'), E('425,430 478,484'),
]
const quays = [E('354,292 370,367'), E('365,332 398,329 425,432'), E('388,206 410,213')]
const labels: [string, number, number][] = [['6H', 790, 461.500], ['5G', 762.700, 588.500], ['4C', 821.700, 724], ['1D', 1030.500, 666.500], ['2A', 1191, 768], ['3B', 1072.500, 865]]
const name = (s: string) => s.replace('!', '')
</script>

<template>
  <div class="app">
    <header class="title">
      <svg class="logo" viewBox="0 0 24 24" v-html="icons.logo" /><span>QGIS</span>
      <div class="winbtns">
        <svg width="14" height="14"><path d="M1 7.500h12" stroke="#000" /></svg>
        <svg width="14" height="14"><path d="M1.500 4.500h8v8h-8ZM4 4V1.500h8.500v8.500H10" fill="none" stroke="#000" stroke-width="1.300" /></svg>
        <svg width="14" height="14"><path d="M1 1l12 12M13 1L1 13" stroke="#000" stroke-width="1.200" /></svg>
      </div>
    </header>
    <nav class="menu">
      <span v-for="(m, i) in menus" :key="i" :class="{ on: i === 0 }" :style="{ width: m[3] + 'px' }">{{ m[0] }}<u v-if="i > 0">{{ m[1] }}</u><template v-else>{{ m[1] }}</template>{{ m[2] }}</span>
    </nav>
    <div v-for="(r, ri) in [row1, row2]" :key="ri" class="bar">
      <div v-for="(g, gi) in r" :key="gi" class="grp" :style="{ width: g.w + 'px' }">
        <i class="grip" />
        <template v-for="(t, ti) in g.items" :key="ti">
          <div v-if="t === '#'" class="snap">
            <div class="num">0,00<span class="spin"><b class="up" /><b class="dn" /></span></div>
            <div class="unit">metri<b class="tri" /></div>
          </div>
          <span v-else-if="name(t) === '-' || t === '+'" class="ar" :class="{ on: t[0] === '!', dark: t !== '-' }"><b class="tri" /></span>
          <span v-else class="cell" :class="{ on: t[0] === '!' }"><svg class="ic" viewBox="0 0 24 24" v-html="icons[name(t)]" /></span>
        </template>
      </div>
    </div>

    <main class="main">
      <aside class="side">
        <i class="hgrip" />
        <svg v-for="n in ['addl', 'ogc', 'vnew', 'feather', 'chip']" :key="n" class="ic" viewBox="0 0 24 24" v-html="icons[n]" />
        <hr>
        <i class="hgrip" />
        <svg v-for="n in ['cross', 'topoc']" :key="n" class="ic" viewBox="0 0 24 24" v-html="icons[n]" />
      </aside>

      <div class="docks">
        <div class="dt"><span>Layer</span><b class="fl" /><svg class="x" viewBox="0 0 10 10"><path d="M1 1l8 8M9 1L1 9" /></svg></div>
        <div class="tools">
          <span v-for="(t, i) in layerTools" :key="i" class="tc" :class="{ on: t[0] === '!', sm: t === '-' }"><b v-if="t === '-'" class="tri" /><svg v-else class="si" viewBox="0 0 24 24" v-html="icons[name(t)]" /></span>
        </div>
        <div class="box tree">
          <div class="lay"><svg class="chk" viewBox="0 0 16 16"><path d="M3.500 8l3 3.500 6-7" /></svg><i class="sw" /><b>circoscrizioni_pa</b></div>
        </div>
        <div class="dt dt2"><span>circoscrizioni_pa :: Totale degli elementi: 8, Filtrati: 8, ...</span><b class="fl" /><svg class="x" viewBox="0 0 10 10"><path d="M1 1l8 8M9 1L1 9" /></svg></div>
        <div class="tools t2">
          <template v-for="(t, i) in tableTools" :key="i">
            <i v-if="t === '|'" class="vs" />
            <span v-else class="tc" :class="{ sel: t[0] === '!' }"><svg class="si" viewBox="0 0 24 24" v-html="icons[name(t)]" /></span>
          </template>
          <b class="more">»</b>
        </div>
        <div class="box tbl">
          <div class="tr th"><span class="vh" /><span class="c1">CIR_ID</span><span class="c2">lettera</span></div>
          <div v-for="(r, i) in rows" :key="i" class="tr" :class="{ alt: i % 2, picked: r[0] > 6 }">
            <span class="vh">{{ i + 1 }}</span><span class="c1">{{ r[0] }}</span><span class="c2">{{ r[1] }}</span>
          </div>
          <div class="vfill" />
        </div>
        <div class="foot">
          <div class="fbtn"><svg class="si2" viewBox="0 0 24 24" v-html="icons.funnel" /><span>Mostra tutti gli elementi</span><b class="tri" /></div>
          <span class="vb"><svg viewBox="0 0 24 24" v-html="icons.formv" /></span>
          <span class="vb act"><svg viewBox="0 0 24 24" v-html="icons.table" /></span>
        </div>
        <div class="dt"><span>Browser</span><b class="fl" /><svg class="x" viewBox="0 0 10 10"><path d="M1 1l8 8M9 1L1 9" /></svg></div>
        <div class="tools t3">
          <span v-for="t in browserTools" :key="t" class="tc"><svg class="si" viewBox="0 0 24 24" v-html="icons[t]" /></span>
        </div>
        <div class="box brow">
          <div class="flist">
            <div v-for="(f, i) in files" :key="f" class="fr">
              <svg class="chev" viewBox="0 0 12 12"><path v-if="i < 4" d="M3.500 1l5 5-5 5" stroke="#a6a6a6" /><path v-else d="M1 3.500l5 5 5-5" stroke="#404040" /></svg>
              <svg class="dbi" viewBox="0 0 24 24" v-html="icons.dbo" /><span :class="{ wide: f.includes('_') }">{{ f }}</span>
            </div>
            <div class="fr sub"><svg class="pi" viewBox="0 0 24 24" v-html="icons.poly2" /><span>circoscrizioni_pa</span></div>
          </div>
          <div class="vsb"><svg viewBox="0 0 12 12"><path d="M1.500 8.500L6 3.500l4.500 5" /></svg><i /><svg viewBox="0 0 12 12"><path d="M1.500 3.500L6 8.500l4.500-5" /></svg></div>
        </div>
      </div>

      <section class="canvas">
        <svg width="1044" height="926" viewBox="430 122 1044 926">
          <g stroke="#232323" stroke-width="1.200" stroke-linejoin="round" fill="none">
            <polygon :points="green" fill="#029c81" />
            <polygon :points="yellow" fill="#ffff00" stroke-width="1" />
            <polyline v-for="(b, i) in borders" :key="i" :points="b" :stroke-width="i === 1 ? 0.9 : 1.2" />
            <polyline v-for="(b, i) in piers" :key="'p' + i" :points="b" stroke-width="1.100" />
            <path d="M1057 626l3.500 18-6 6.500" stroke-width="2.200" />
            <g v-for="(b, i) in quays" :key="'q' + i"><polyline :points="b" stroke-width="3.400" /><polyline :points="b" stroke="#f4f000" stroke-width="1.900" /></g>
          </g>
          <text v-for="l in labels" :key="l[0]" class="lbl" :x="l[1]" :y="l[2] + 5.500">{{ l[0] }}</text>
        </svg>
      </section>

      <aside class="style">
        <div class="dt"><span>Stile layer</span><b class="fl" /><svg class="x" viewBox="0 0 10 10"><path d="M1 1l8 8M9 1L1 9" /></svg></div>
        <div class="combo lay1"><svg class="pi2" viewBox="0 0 24 24" v-html="icons.poly2" /><span>circoscrizioni_pa</span><b class="tri" /></div>
        <div class="body">
          <div class="strip">
            <svg class="s1" viewBox="0 0 24 24" v-html="icons.brush" />
            <div class="cur"><svg viewBox="0 0 24 24" v-html="icons.tagg" /></div>
            <svg class="s1" viewBox="0 0 24 24" v-html="icons.cubec" />
            <svg class="s2" viewBox="0 0 24 24" v-html="icons.brushes" />
            <svg class="s2" viewBox="0 0 24 24" v-html="icons.hist" />
          </div>
          <div class="opts">
            <div class="r1"><div class="combo"><svg class="tg" viewBox="0 0 24 24" v-html="icons.label" /><span>Mostra le etichette per questo vettore</span><b class="tri" /></div><div class="sq w"><svg viewBox="0 0 24 24" v-html="icons.place" /></div></div>
            <div class="r2"><span>Etichetta con</span><div class="edit">"CIR_ID" &nbsp;|| &nbsp;"lettera"<svg width="10" height="7"><path d="M1 1l4 4 4-4" fill="none" stroke="#444" /></svg></div><div class="sq"><svg viewBox="0 0 24 24" v-html="icons.epsi" /></div></div>
            <div class="tabs"><span v-for="(t, i) in tabs" :key="t[0]" :class="{ on: i === 5 }" :style="{ width: t[1] + 'px' }"><svg viewBox="0 0 24 24" v-html="icons[t[0]]" /></span></div>
            <div class="pos">Posizionamento</div>
            <div class="radios"><label v-for="(r, i) in radios" :key="r"><i :class="{ on: i === 2 }" />{{ r }}</label></div>
            <div class="under">
              <div class="hid"><i /><i /></div>
              <svg class="dd a" viewBox="0 0 24 24" v-html="icons.ddef" />
              <svg class="dd b" viewBox="0 0 24 24" v-html="icons.ddef" />
              <svg class="dd c" viewBox="0 0 24 24" v-html="icons.ddef" />
              <hr class="h1"><hr class="h2">
            </div>
            <div class="rotrow"><span>Rotazione</span><svg class="dd" viewBox="0 0 24 24" v-html="icons.ddef" /><svg class="chk" viewBox="0 0 16 16"><path d="M3.500 8l3 3.500 6-7" /></svg><span>Mantieni i valori di rotazione</span></div>
            <div class="prio"><b class="tri" /><b>Priorità</b><hr></div>
            <div class="slide">
              <span>Bassa</span>
              <svg width="264" height="30" viewBox="0 0 264 30"><rect x=".5" y="9.500" width="261" height="3" fill="#e7eaea" stroke="#d6d6d6" /><path v-for="k in ticks" :key="k" :d="`M${6.500 + k * 24.900} 22v5`" stroke="#a8a89c" /><path d="M126 1h11v13l-5.500 5.500-5.500-5.500Z" fill="#0078d7" /></svg>
              <span class="alta">Alta</span><svg class="dd" viewBox="0 0 24 24" v-html="icons.ddef" />
            </div>
            <div class="hsb"><svg viewBox="0 0 12 12"><path d="M8.500 1.500L3.500 6l5 4.500" /></svg><i /><svg viewBox="0 0 12 12"><path d="M3.500 1.500L8.500 6l-5 4.500" /></svg></div>
            <div class="apply"><div class="sq"><svg viewBox="0 0 24 24" v-html="icons.undoo" /></div><div class="sq g"><svg viewBox="0 0 24 24" v-html="icons.redog" /></div><svg class="chk" viewBox="0 0 16 16"><path d="M3.500 8l3 3.500 6-7" /></svg><span>Aggiornamento immediato</span><div class="btn">Applica</div></div>
          </div>
        </div>
      </aside>
    </main>

    <footer class="status">
      <div class="loc"><svg viewBox="0 0 24 24" v-html="icons.lens" />Digita per localizzare (Ctrl+K)</div>
      <span class="msg">2 elementi selezionati dal layer circoscrizioni_pa.</span>
      <span style="width: 71px">Coordinata</span><div class="inp co" style="width: 112px">2386394,4222588</div>
      <svg class="ms" viewBox="0 0 24 24" v-html="icons.mouse" />
      <span style="width: 34px">Scala</span><div class="inp" style="width: 98px">1:103.863<svg width="10" height="7"><path d="M1 1l4 4 4-4" fill="none" stroke="#444" /></svg></div>
      <svg class="lk" viewBox="0 0 24 24" v-html="icons.lock" />
      <span style="width: 143px">Lente d'ingrandimento</span><div class="inp" style="width: 87px">100%<span class="spin"><b class="up" /><b class="dn" /></span></div>
      <span style="width: 71px; margin-left: 10px">Rotazione</span><div class="inp" style="width: 84px">0,0 °<span class="spin"><b class="up" /><b class="dn" /></span></div>
      <svg class="chk" viewBox="0 0 16 16"><path d="M3.500 8l3 3.500 6-7" /></svg><span style="width: 77px">Visualizza</span>
      <svg class="gb" viewBox="0 0 24 24" v-html="icons.globeg" /><span style="width: 78px">EPSG:3004</span>
      <svg class="bb" viewBox="0 0 24 24" v-html="icons.bubble" /><svg class="bb pz" viewBox="0 0 24 24" v-html="icons.puzzle" />
    </footer>
    <div class="edge" />

    <section class="dialog">
      <div class="dhead"><svg class="logo" viewBox="0 0 24 24" v-html="icons.logo" /><span>Finestra di dialogo delle espressioni</span><b>?</b><svg width="14" height="14"><path d="M1 1l12 12M13 1L1 13" stroke="#000" stroke-width="1.100" /></svg></div>
      <div class="dtabs"><span class="on">Espressione</span><span>Editor delle funzioni</span></div>
      <div class="dbody">
        <div class="dl">
          <div class="ops"><span v-for="o in ops" :key="o">{{ o }}</span></div>
          <div class="code"><div class="line"><span class="f1">"CIR_ID"</span><span class="op">||</span><i /><span>"lettera"</span></div></div>
          <div class="prev">Anteprima:<span>'2A'</span></div>
        </div>
        <div class="dm">
          <div class="cerca">Cerca</div>
          <div class="fx">
            <div class="fxt">
              <div class="fxl">
                <div class="n"><b>symbol_col</b></div><div class="n"><b>value</b></div>
                <div v-for="f in ['Aggregates', 'Arrays', 'Campi e val']" :key="f" class="gp"><svg viewBox="0 0 12 12"><path d="M3.500 1l5 5-5 5" stroke="#a6a6a6" fill="none" stroke-width="1.800" /></svg><span>{{ f }}</span></div>
              </div>
              <div class="vsb"><svg viewBox="0 0 12 12"><path d="M1.500 8.500L6 3.500l4.500 5" /></svg><i /><svg viewBox="0 0 12 12"><path d="M1.500 3.500L6 8.500l4.500-5" /></svg></div>
            </div>
            <div class="fxh"><svg viewBox="0 0 12 12"><path d="M8.500 1.500L3.500 6l5 4.500" /></svg><i /><svg viewBox="0 0 12 12"><path d="M3.500 1.500L8.500 6l-5 4.500" /></svg></div>
          </div>
        </div>
        <div class="dh">
          <div class="ht"><h3>raggruppa<br>Aggregates</h3><p>Contiene<br>funzioni che<br>aggregano<br>valori nei livelli</p></div>
          <div class="vsb"><svg viewBox="0 0 12 12"><path d="M1.500 8.500L6 3.500l4.500 5" /></svg><i /><svg viewBox="0 0 12 12"><path d="M1.500 3.500L6 8.500l4.500-5" /></svg></div>
        </div>
      </div>
      <div class="dfoot"><div class="btn ok">OK</div><div class="btn">Annulla</div><div class="btn">Aiuto</div></div>
    </section>

    <svg class="notes" width="1920" height="1080">
      <text transform="translate(744 658) rotate(-24)" class="wm" textLength="475">Pigrecoinfinito</text>
      <g stroke="#ed1c24" stroke-width="1.600" fill="none"><path d="M322 677C437 655 440 338 578 322" /><path d="M1599 245C1440 282 1265 288 1117 358" /></g>
      <g fill="#ed1c24"><circle cx="322" cy="677" r="6" /><circle cx="1599" cy="245" r="6" /><path d="M596 320.500l-20-4 4 6.500-3 6.500Z" /><path d="M1101 366l20.500-3.500-5.500-4.500-1-7.500Z" /></g>
    </svg>
  </div>
</template>

<style>
body { margin: 0; overflow: hidden; }
</style>

<style scoped>
* { box-sizing: border-box; }
.app { position: relative; width: 1920px; height: 1080px; overflow: hidden; display: flex; flex-direction: column; background: #f0f0f0; color: #111; font: 13.5px/18px "Open Sans", "Noto Sans", sans-serif; letter-spacing: -.17px; white-space: nowrap; }
svg { display: block; flex: none; overflow: visible; }
.title { height: 29px; background: #fff; display: flex; align-items: center; padding: 0 0 1px 3px; }
.title span { font-size: 14px; letter-spacing: 0; }
.logo { width: 20px; height: 20px; margin-right: 4px; }
.winbtns { margin-left: auto; display: flex; gap: 44px; margin-right: 26px; }
.menu { height: 24px; background: #fff; display: flex; border-bottom: 1px solid #e4e4e4; }
.menu span { height: 23px; line-height: 24px; padding-left: 8px; flex: none; }
.menu .on { background: #e5f3ff; box-shadow: inset 0 0 0 1px #cce8ff; }
.menu u { text-underline-offset: 2px; }
.bar { height: 34px; display: flex; border-bottom: 1px solid #b0b0b0; box-shadow: inset 0 1px #fff; flex: none; }
.grp { display: flex; align-items: center; border-right: 1px solid #b5b5b5; flex: none; box-shadow: inset 1px 1px #fff; }
.grp:last-child { border-right: 0; }
.grip { width: 2px; height: 26px; margin: 0 5px 0 4.500px; background: repeating-linear-gradient(#b2b2b2 0 2px, transparent 2px 4px); }
.cell { width: 31px; height: 28px; display: flex; align-items: center; justify-content: center; flex: none; }
.ic { width: 23px; height: 23px; }
.ar { width: 15px; height: 28px; display: flex; align-items: center; justify-content: center; flex: none; }
.on.cell, .on.ar { background: #c0dcf3; box-shadow: inset 0 0 0 1px #90c8f6; }
.tri { border: 5px solid transparent; border-top-color: #6b6b6b; border-bottom: 0; width: 0; height: 0; display: block; flex: none; }
.dark .tri { border-top-color: #000; }
.snap { display: flex; margin-left: -1px; margin-right: -1px; color: #777; height: 23px; width: 163px; }
.num { width: 96px; border: 1px solid #bbb; display: flex; padding-left: 3px; align-items: center; }
.spin { margin-left: auto; width: 15px; height: 100%; display: flex; flex-direction: column; justify-content: space-around; align-items: center; border-left: 1px solid #ccc; background: #f3f3f3; }
.up { border: 4px solid transparent; border-bottom-color: #333; border-top: 0; }
.dn { border: 4px solid transparent; border-top-color: #333; border-bottom: 0; }
.unit { width: 64px; margin-left: 1px; background: #ccc; border: 1px solid #bfbfbf; display: flex; align-items: center; padding: 0 4px; justify-content: space-between; }
.unit .tri { border-width: 4px 4px 0; border-top-color: #8a8a8a; }
.main { height: 928px; display: flex; flex: none; }
.side { width: 35px; border-right: 1px solid #b5b5b5; display: flex; flex-direction: column; align-items: center; gap: 7.500px; border-bottom: 1px solid #b5b5b5; }
.hgrip { width: 26px; height: 2px; margin: 4px 0 2px; background: repeating-linear-gradient(90deg, #b2b2b2 0 2px, transparent 2px 4px); flex: none; }
.side .hgrip:first-child { margin-bottom: 1px; }
.side hr { width: 34px; border: 0; border-top: 1px solid #b0b0b0; margin: -4px 0 -8px; }
.docks { width: 394px; padding: 1px 5px 0 0; display: flex; flex-direction: column; border-right: 0; }
.dt { height: 25px; background: #d9d9d9; border: 1px solid #b9b9b9; display: flex; align-items: center; padding-left: 4px; flex: none; }
.dt .fl { margin-left: auto; width: 6px; height: 6px; border: 1px solid #000; border-top-width: 2px; background: #d9d9d9; box-shadow: 3px -3px 0 -1px #d9d9d9, 3px -3px 0 0 #000; margin-right: 12px; transform: translateY(1px); }
.x { width: 8px; height: 8px; margin-right: 4px; }
.x path { stroke: #000; stroke-width: 1.800; }
.tools { height: 28px; display: flex; align-items: center; padding: 2px 0 0 2px; flex: none; }
.tc { width: 23px; height: 21px; display: flex; align-items: center; justify-content: center; flex: none; }
.tools:not(.t2) .tc { margin-right: -.15px; }
.tc.on { background: #c0dcf3; box-shadow: inset 0 0 0 1px #90c8f6; }
.tc.sel { background: #d5e7f5; box-shadow: inset 0 0 0 1px #b8d9f2; }
.tc.sm { width: 16px; }
.tc.sm .tri { border-width: 5px 4px 0; }
.si { width: 16px; height: 16px; }
.box { background: #fff; border: 1px solid #828790; flex: none; }
.tree { height: 228px; padding: 1px 0 0 28px; }
.lay { display: flex; align-items: center; height: 20px; }
.lay b { margin-left: 6px; text-decoration: underline; letter-spacing: -.57px; color: #000; }
.chk { width: 16px; height: 16px; background: #fff; border: 1px solid #222; flex: none; }
.chk path { fill: none; stroke: #222; stroke-width: 1.500; }
.sw { width: 18px; height: 18px; background: #029c81; border: 1px solid #0b5d4e; margin-left: 6px; }
.dt2 { margin-top: 6px; }
.dt2 span { letter-spacing: -.04px; }
.t2 { height: 28px; padding-left: 0; }
.vs { width: 1px; height: 15px; background: #c4c4c4; margin: 0 3px 0 3px; }
.more { margin-left: auto; margin-right: 5px; font-size: 14px; }
.tbl { height: 353px; display: flex; flex-direction: column; color: #111; }
.tr { display: flex; height: 37px; line-height: 36px; }
.th { height: 28px; line-height: 28px; flex: none; }
.vh { width: 17px; padding-left: 4px; flex: none; line-height: 38px; height: 37px; }
.th .vh { height: auto; }
.c1 { width: 125px; text-align: right; padding-right: 3px; border-right: 1px solid #d8d8d8; border-bottom: 1px solid #d8d8d8; }
.c2 { width: 125px; padding-left: 3px; border-right: 1px solid #d8d8d8; border-bottom: 1px solid #d8d8d8; }
.th .c1, .th .c2 { text-align: center; border-bottom: 0; padding: 0; }
.alt .c1, .alt .c2 { background: #f4f4f4; }
.picked .c1, .picked .c2 { background: #39f; color: #fff; }
.vfill { flex: 1; width: 17px; background: #f0f0f0; }
.foot { height: 35px; display: flex; padding: 1px 4px 0 4px; }
.fbtn { width: 184px; height: 24px; background: #e1e1e1; border: 1px solid #adadad; display: flex; align-items: center; padding-left: 5px; }
.fbtn span { margin-left: 5px; }
.fbtn .tri { border-width: 5px 4px 0; border-top-color: #000; margin: 10px 0 0 -4px; }
.si2 { width: 18px; height: 20px; }
.vb { width: 25px; height: 24px; background: #e1e1e1; border: 1px solid #adadad; padding: 3px; margin-left: auto; }
.vb svg { width: 17px; height: 17px; }
.vb.act { margin-left: 2px; border-color: #0060b0; background: #cce4f7; }
.t3 { height: 28px; padding-left: 1px; }
.brow { height: 146px; display: flex; overflow: hidden; }
.flist { width: 367px; padding-top: 0; }
.fr { height: 24px; display: flex; align-items: center; padding-left: 31px; color: #000; }
.fr .wide { letter-spacing: .12px; }
.chev { width: 12px; height: 12px; margin-right: 11px; }
.chev path { fill: none; stroke-width: 2; }
.dbi { width: 18px; height: 18px; margin-right: 7px; }
.fr.sub { padding-left: 77px; }
.pi { width: 21px; height: 17px; margin-right: 6px; }
.vsb { width: 20px; background: #f0f0f0; display: flex; flex-direction: column; align-items: center; padding: 5px 0; }
.vsb svg, .hsb svg, .fxh svg { width: 12px; height: 12px; }
.vsb path, .hsb path, .fxh path { fill: none; stroke: #505050; stroke-width: 2; }
.vsb i { width: 100%; height: 22px; background: #cdcdcd; margin-top: 28px; margin-bottom: auto; }
.canvas { width: 1046px; background: #fff; border: 1px solid #828790; overflow: hidden; flex: none; }
.lbl { font: 16px "Open Sans", sans-serif; text-anchor: middle; paint-order: stroke; stroke: #fff; stroke-width: 4px; fill: #000; stroke-linejoin: round; letter-spacing: -.5px; }
.style { width: 441px; margin-left: 5px; padding-top: 1px; display: flex; flex-direction: column; }
.combo { background: #e1e1e1; border: 1px solid #adadad; height: 26px; display: flex; align-items: center; color: #000; }
.combo .tri { border-width: 5px 4px 0; border-top-color: #000; margin-left: auto; margin-right: 5px; }
.lay1 { margin: 5px 3px 0 3px; width: 434px; }
.lay1 span { letter-spacing: -.05px; }
.pi2 { width: 20px; height: 17px; margin: 0 3px 0 4px; }
.body { display: flex; margin: 7px 0 0 3px; height: 864px; }
.strip { width: 38px; height: 861px; background: #5d5d5d; flex: none; display: flex; flex-direction: column; align-items: center; }
.strip svg { width: 29px; height: 29px; }
.strip .s1 { margin-top: 6px; }
.strip .s2 { margin-top: 13px; }
.strip .cur { background: #f0f0f0; width: 38px; height: 42px; margin-top: 7px; padding: 9px 0 0 8px; }
.strip .cur svg { width: 28px; height: 24px; }
.opts { width: 396px; padding-left: 3px; display: flex; flex-direction: column; height: 861px; }
.r1 { display: flex; margin-top: 1px; flex: none; }
.r1 .combo { width: 350px; }
.tg { width: 18px; height: 18px; margin: 0 4px 0 5px; }
.sq { width: 25px; height: 24px; background: #e1e1e1; border: 1px solid #adadad; display: flex; align-items: center; justify-content: center; }
.sq svg { width: 17px; height: 17px; }
.sq.w { width: 35px; height: 26px; margin-left: 7px; }
.sq.w svg { width: 21px; height: 18px; }
.r2 { display: flex; align-items: center; margin-top: 7px; flex: none; color: #000; }
.r2 > span { width: 85px; }
.edit { width: 274px; height: 26px; background: #fff; border: 1px solid #7a7a7a; padding: 0 4px 0 7px; display: flex; align-items: center; justify-content: space-between; letter-spacing: .05px; }
.r2 .sq { margin-left: 8px; }
.tabs { height: 28px; margin-top: 6px; display: flex; align-items: flex-end; border-bottom: 1px solid #a0a0a0; padding-left: 1px; width: 392px; flex: none; }
.tabs span { height: 25px; border: 1px solid #d9d9d9; border-left: 0; border-bottom: 0; display: flex; align-items: center; justify-content: center; }
.tabs span:first-child { border-left: 1px solid #d9d9d9; }
.tabs .on { background: #fff; height: 28px; margin-bottom: -1px; }
.tabs svg { width: 19px; height: 18px; }
.pos { margin: 18px 0 0 6px; }
.radios { display: grid; grid-template-columns: 158px 220px; grid-auto-rows: 28px; margin: 14px 0 0 17px; letter-spacing: -.1px; }
.radios label { display: flex; align-items: center; }
.radios i, .hid i { width: 16px; height: 16px; border: 1px solid #333; border-radius: 50%; background: #fff; margin-right: 7px; }
.radios .on { box-shadow: inset 0 0 0 2.500px #fff; background: #333; }
.under { height: 281px; position: relative; flex: none; }
.hid { display: flex; gap: 113px; padding: 20px 0 0 74px; }
.dd { width: 24px; height: 22px; }
.under .dd { position: absolute; left: 368px; }
.a { top: 17px; } .b { top: 79px; } .c { top: 119px; }
.under hr { position: absolute; left: 6px; width: 386px; margin: 0; border: 0; border-top: 1px solid #d9d9d9; }
.h1 { top: 159px; } .h2 { top: 185px; }
.rotrow { height: 32px; margin-left: 6px; border-left: 1px solid #dcdcdc; border-bottom: 1px solid #dcdcdc; display: flex; align-items: center; padding: 0 0 16px 8px; width: 386px; flex: none; }
.rotrow .dd { margin-left: 36px; }
.rotrow .chk { margin: 0 7px 0 20px; }
.prio { display: flex; align-items: center; margin: 7px 0 0 8px; color: #444; height: 20px; flex: none; }
.prio .tri { border-width: 7px 6px 0; border-top-color: #333; margin-right: 8px; }
.prio hr { flex: 1; margin: 0 4px 0 7px; border: 0; border-top: 1px solid #dcdcdc; }
.slide { margin: 0 0 0 6px; border-left: 1px solid #dcdcdc; border-bottom: 1px solid #dcdcdc; height: 49px; display: flex; align-items: center; padding-left: 8px; width: 386px; flex: none; }
.slide > span { width: 40px; }
.slide > .alta { width: 33px; margin-left: 4px; }
.hsb { margin: 182px 0 0 6px; height: 21px; border-top: 1px solid #fff; display: flex; align-items: center; width: 386px; padding: 0 4px; flex: none; }
.hsb i { width: 338px; height: 19px; background: #cdcdcd; margin: 0 auto 0 5px; }
.apply { display: flex; align-items: center; margin: 14px 0 0 1px; flex: none; letter-spacing: -.06px; }
.apply .g { margin-left: 8px; }
.apply .chk { margin: 0 6px 0 41px; }
.btn { width: 91px; height: 26px; background: #e1e1e1; border: 1px solid #adadad; text-align: center; line-height: 24px; color: #000; }
.apply .btn { margin-left: auto; margin-right: 1px; }
.status { height: 29px; display: flex; align-items: center; padding: 3px 0 0 4px; color: #000; flex: none; }
.status > span { flex: none; }
.loc { width: 275px; height: 24px; background: #fff; border: 1px solid #7a7a7a; color: #777; display: flex; align-items: center; flex: none; letter-spacing: -.1px; }
.loc svg { width: 13px; height: 13px; margin: 0 8px 0 7px; }
.status .msg { margin-left: 8px; width: 585px; letter-spacing: -.04px; }
.inp { height: 23px; background: #fff; border: 1px solid #7a7a7a; padding-left: 3px; display: flex; align-items: center; flex: none; }
.inp.co { letter-spacing: -.56px; }
.inp > svg { margin: 0 4px 0 auto; }
.ms { width: 19px; height: 19px; margin: 0 14px 0 3px; }
.lk { width: 15px; height: 18px; margin: 0 15px 0 6px; }
.status .chk { margin: 0 7px 0 6px; }
.gb { width: 19px; height: 19px; margin: 0 5px 0 0; }
.bb { width: 20px; height: 19px; }
.pz { margin-left: 13px; width: 22px; }
.edge { height: 2px; background: #231f20; }
.dialog { position: absolute; left: 1132px; top: 435px; width: 764px; height: 270px; background: #f0f0f0; border: 1px solid #555; display: flex; flex-direction: column; color: #000; }
.dhead { height: 38px; background: #fff; display: flex; align-items: center; padding: 0 23px 1px 9px; flex: none; }
.dhead .logo { margin-right: 5px; }
.dhead span { font-size: 14.500px; letter-spacing: -.08px; }
.dhead b { margin-left: auto; margin-right: 47px; font-weight: 400; font-size: 15px; }
.dtabs { display: flex; align-items: flex-end; height: 28px; border-bottom: 1px solid #a0a0a0; margin: 0 3px; flex: none; }
.dtabs span { height: 23px; border: 1px solid #d9d9d9; border-bottom: 0; width: 152px; text-align: center; line-height: 22px; letter-spacing: -.08px; }
.dtabs .on { height: 27px; width: 105px; background: #fff; margin-bottom: -1px; line-height: 26px; }
.dbody { display: flex; height: 153px; margin: 11px 0 0 3px; }
.dl { width: 463px; margin-right: 15px; }
.ops { display: flex; gap: 4.200px; padding: 1px 0 0 1px; }
.ops span { width: 26px; height: 26px; background: #e1e1e1; border: 1px solid #adadad; text-align: center; line-height: 24px; }
.code { margin-top: 7px; height: 94px; background: #fff; border: 1px solid #828790; padding: 1px; }
.line { height: 22px; background: #fdf2eb; display: flex; align-items: center; color: #808000; font-size: 17px; padding-left: 5px; letter-spacing: -.4px; }
.f1 { width: 78px; letter-spacing: .3px; }
.op { color: #333; width: 18px; }
.line i { width: 1.500px; height: 22px; background: #000; }
.prev { margin-top: 7px; }
.prev span { margin-left: 18px; }
.dm { width: 120px; margin-right: 6px; }
.cerca { height: 25px; border: 1px solid #7a7a7a; background: #fff; color: #777; padding-left: 3px; line-height: 23px; }
.fx { margin-top: 6px; height: 112px; border: 1px solid #828790; background: #fff; }
.fxt { display: flex; height: 90px; }
.fxl { width: 98px; overflow: hidden; padding-top: 0; }
.fxl .n { height: 20px; padding-left: 28px; letter-spacing: -.62px; line-height: 20px; }
.gp { height: 20px; display: flex; align-items: center; }
.gp svg { width: 10px; height: 10px; margin: 0 6px 0 7px; }
.gp span { background: #ececec; flex: 1; padding-left: 4px; height: 20px; line-height: 20px; letter-spacing: -.25px; }
.fx .vsb { padding: 4px 0 7px; }
.fx .vsb i { margin-top: 5px; }
.fxh { display: flex; height: 20px; background: #f0f0f0; align-items: center; padding-left: 4px; }
.fxh i { width: 42px; height: 20px; background: #cdcdcd; margin: 0 17px 0 5px; }
.dh { width: 141px; border: 1px solid #7a7a7a; background: #fff; display: flex; height: 143px; overflow: hidden; }
.dh, .fx { flex: none; }
.ht { width: 119px; padding: 4px 5px 0 4px; overflow: hidden; }
.ht h3 { margin: 0; font-size: 17.500px; line-height: 25px; text-align: right; color: #93b023; background: #f6f6f6; letter-spacing: -.55px; }
.ht p { margin: 12px 0 0; line-height: 20.300px; }
.dh .vsb { padding: 4px 0; }
.dh .vsb i { height: 80px; margin-top: 4px; }
.dfoot { display: flex; justify-content: flex-end; gap: 9px; margin: 8px 4px 0 0; }
.btn.ok { border: 2px solid #0078d7; line-height: 22px; }
.notes { position: absolute; left: 0; top: 0; pointer-events: none; }
.wm { font: 700 61px "Open Sans", sans-serif; fill: none; stroke: #000; stroke-opacity: .07; stroke-width: 1; }
</style>
